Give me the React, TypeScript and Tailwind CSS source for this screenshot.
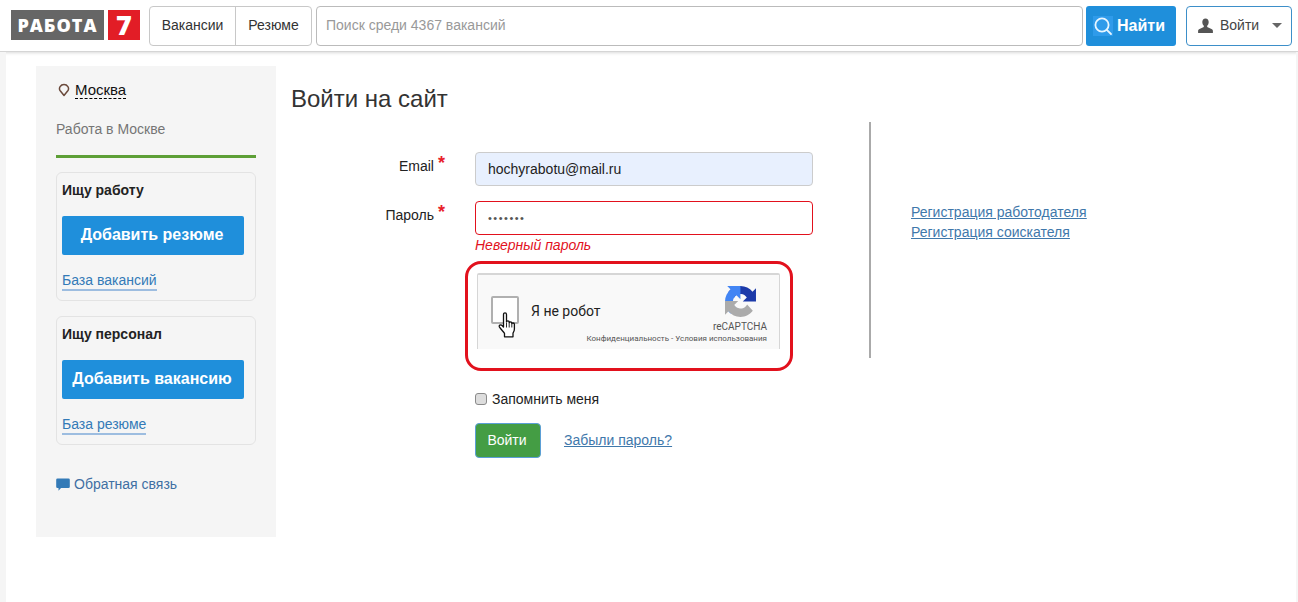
import React from "react";

const font = "font-['Liberation_Sans',Arial,sans-serif]";

function SearchIcon() {
  return (
    <svg width="20" height="20" viewBox="0 0 20 20" fill="none" className="bg-[#2f9bea]">
      <circle cx="9" cy="9" r="6.6" stroke="#e8f6ff" strokeWidth="1.8" />
      <path d="M13.8 13.8 18 18" stroke="#e8f6ff" strokeWidth="1.8" strokeLinecap="round" />
    </svg>
  );
}

function UserIcon() {
  return (
    <svg width="15" height="15" viewBox="0 0 15 15" fill="#555">
      <path d="M7.5 0.5C5.4 0.5 4.3 2.1 4.3 4c0 1.5.6 3 1.5 3.8v1.1L1 11.2c-.6.3-.9.9-.9 1.6V15h14.8v-2.2c0-.7-.3-1.3-.9-1.6L9.2 8.9V7.8c.9-.8 1.5-2.3 1.5-3.8 0-1.9-1.1-3.5-3.2-3.5z" />
    </svg>
  );
}

function RecaptchaLogo() {
  return (
    <svg width="31" height="31" viewBox="0 0 64 64">
      <path d="M64 31.955l-.033-1.37V4.687l-7.16 7.16C50.948 4.674 42.033.093 32.05.093c-10.4 0-19.622 4.96-25.458 12.64l11.736 11.86a15.55 15.55 0 0 1 4.754-5.334c2.05-1.6 4.952-2.906 8.968-2.906.485 0 .86.057 1.135.163 4.976.393 9.29 3.14 11.83 7.125l-8.307 8.307 32.29.004" fill="#1c3aa9" />
      <path d="M31.862 0l-1.37.033H4.594l7.16 7.16C4.58 13.052 0 21.967 0 31.95c0 10.4 4.96 19.622 12.64 25.458l11.86-11.736a15.55 15.55 0 0 1-5.334-4.754c-1.6-2.05-2.906-4.952-2.906-8.968 0-.485.057-.86.163-1.135.393-4.976 3.14-9.29 7.125-11.83l8.307 8.307L31.86 0" fill="#4285f4" />
      <path d="M.001 31.955l.033 1.37v25.9l7.16-7.16c5.86 7.173 14.774 11.754 24.76 11.754 10.4 0 19.622-4.96 25.458-12.64L45.676 38.32a15.55 15.55 0 0 1-4.754 5.334c-2.05 1.6-4.952 2.906-8.968 2.906-.485 0-.86-.057-1.135-.163-4.976-.393-9.29-3.14-11.83-7.125l8.307-8.307-32.29.004" fill="#ababab" />
    </svg>
  );
}

function HandCursor() {
  return (
    <svg width="20" height="26" viewBox="0 0 20 26" fill="#fff" stroke="#111" strokeWidth="1.3" strokeLinejoin="round">
      <path d="M5.500 2.500c0-2.300 3-2.300 3 0v7.500c0-1.600 2.700-1.600 2.700 0v1c0-1.500 2.600-1.500 2.600 0v1c0-1.400 2.600-1.400 2.600.3v4.700c0 2-.9 3-1.400 4.200v3.600H6.500v-3.400c-1.200-1.800-3-3.500-5-6.300-1.100-1.700 1.200-3.100 2.600-1.600l1.400 1.600z" />
      <path d="M8.500 11v4.500M11.200 11.500v4M13.800 12.500v3" fill="none" strokeWidth="0.9" />
    </svg>
  );
}

function ActionCard({ title, button, link }: { title: string; button: string; link: string }) {
  return (
    <div className="border border-[#e3e3e3] rounded-[6px] h-[129px] px-[5px] pt-[8px]">
      <div className="text-[14px] leading-[18px] font-bold text-[#222]">{title}</div>
      <button className="mt-[17px] w-[182px] h-[39px] pb-[2px] pr-[2px] bg-[#1f8fdb] rounded-[2px] text-white text-[16px] font-bold">
        {button}
      </button>
      <div className="mt-[13px]">
        <a className="text-[14px] leading-[17px] inline-block text-[#337ab7] border-b-2 border-[#9dbde0]">{link}</a>
      </div>
    </div>
  );
}

function Sidebar() {
  return (
    <aside className="w-[240px] h-[471px] bg-[#f5f5f5] px-[20px] shrink-0">
      <div className="flex items-center gap-[5px] pt-[15px] pl-[2px]">
        <svg width="12" height="14" viewBox="0 0 12 14" fill="none" stroke="#6b4a3c" strokeWidth="1.500">
          <path d="M6 12.500 2 7.500C.5 5 2.500 1.500 6 1.500s5.500 3.500 4 6z" strokeLinejoin="round" />
        </svg>
        <span className="text-[15px] leading-[17px] text-[#111] border-b border-dashed border-black">Москва</span>
      </div>
      <div className="text-[14px] leading-[17px] text-[#757575] mt-[22px]">Работа в Москве</div>
      <div className="h-[3px] bg-[#5d9f36] mt-[17px] mb-[14px]" />
      <div className="flex flex-col gap-[15px]">
        <ActionCard title="Ищу работу" button="Добавить резюме" link="База вакансий" />
        <ActionCard title="Ищу персонал" button="Добавить вакансию" link="База резюме" />
      </div>
      <div className="flex items-center gap-[4px] mt-[31px] text-[14px] leading-[17px] text-[#3f6fa3]">
        <svg width="14" height="14" viewBox="0 0 14 14" fill="#337ab7">
          <path d="M1.500 0.500h11a1.300 1.300 0 0 1 1.300 1.300v7a1.300 1.300 0 0 1-1.300 1.300H5L2.500 12.800V10.100h-1A1.300 1.300 0 0 1 .2 8.800v-7A1.300 1.300 0 0 1 1.500.500z" />
        </svg>
        <span>Обратная связь</span>
      </div>
    </aside>
  );
}

function Field({ label, children }: { label: string; children: React.ReactNode }) {
  return (
    <div className="flex">
      <label className="w-[154px] flex justify-end gap-[4px] text-[14px] leading-[20px] text-[#222] pt-[4px]">
        {label}
        <span className="text-[#e8202a] text-[18px] leading-[14px] font-bold">*</span>
      </label>
      <div className="ml-[30px]">{children}</div>
    </div>
  );
}

function Captcha() {
  return (
    <div className="ml-[174px] mt-[6px] w-[328px] h-[110px] border-[3px] border-[#e2111d] rounded-[16px] pt-[9px] pl-[9px]">
      <div className="relative w-[303px] h-[76px] bg-[#f9f9f9] border-x border-t-2 border-[#d6d6d6] rounded-t-[2px] flex">
        <div className="w-[28px] h-[28px] mt-[21px] ml-[13px] border-2 border-[#b0b0b0] bg-white rounded-[2px] shrink-0" />
        <div className="ml-[12px] mt-[28px] text-[14px] leading-[17px] text-[#222] font-['Roboto',sans-serif]">Я не робот</div>
        <div className="absolute left-[20px] top-[37px]">
          <HandCursor />
        </div>
        <div className="absolute right-[12px] top-[11px] flex flex-col items-end font-['Roboto',sans-serif]">
          <div className="mr-[11px] h-[31px]">
            <RecaptchaLogo />
          </div>
          <div className="text-[10px] leading-[12px] text-[#555] mt-[4px]">reCAPTCHA</div>
          <div className="text-[8px] leading-[10px] text-[#555] mt-[1px] whitespace-nowrap">Конфиденциальность - Условия использования</div>
        </div>
      </div>
    </div>
  );
}

function LoginForm() {
  return (
    <main className="flex-1 pl-[15px]">
      <h1 className="text-[24px] leading-[28px] font-normal text-[#333] mt-[19px]">Войти на сайт</h1>
      <div className="flex mt-[9px]">
        <div className="w-[580px] h-[236px] border-r-2 border-[#aaa] pt-[30px]">
          <Field label="Email">
            <input
              readOnly
              value="hochyrabotu@mail.ru"
              className="w-[338px] h-[34px] bg-[#e8f0fe] border border-[#ccc] rounded-[4px] px-[12px] text-[14px] text-[#222] outline-none"
            />
          </Field>
          <div className="mt-[15px]">
            <Field label="Пароль">
              <input
                readOnly
                type="password"
                value="1234567"
                className="w-[338px] h-[34px] bg-white border border-[#e2111d] rounded-[4px] px-[12px] text-[11px] tracking-[1.5px] text-[#555] outline-none"
              />
              <div className="text-[14px] leading-[20px] italic text-[#e2111d]">Неверный пароль</div>
            </Field>
          </div>
          <Captcha />
        </div>
        <div className="pl-[40px] pt-[80px] flex flex-col text-[14px] leading-[20px] text-[#3f78ab] underline">
          <a>Регистрация работодателя</a>
          <a>Регистрация соискателя</a>
        </div>
      </div>
      <div className="ml-[184px] mt-[31px] flex items-center gap-[5px] h-[20px] text-[14px] text-[#222]">
        <span className="w-[12px] h-[12px] bg-[#ddd] border border-[#8a8a8a] rounded-[3px]" />
        Запомнить меня
      </div>
      <div className="ml-[184px] mt-[14px] flex items-center">
        <button className="w-[66px] h-[35px] pr-[2px] bg-[#449d44] border border-[#5b9fd6] rounded-[4px] text-white text-[14px]">Войти</button>
        <a className="ml-[23px] text-[14px] text-[#3f78ab] underline">Забыли пароль?</a>
      </div>
    </main>
  );
}

export default function App() {
  return (
    <div className={`${font} min-h-[602px] bg-white relative`}>
      <header className="h-[52px] bg-white border-b border-[#d5d5d5] shadow-[0_1px_3px_rgba(0,0,0,0.15)] flex items-center pl-[11px] pr-[6px] gap-[4px] relative">
        <div className="flex h-[30px] items-stretch gap-[4px] mb-[1px] font-['Open_Sans',sans-serif]">
          <div className="w-[93px] bg-[#666] text-white font-extrabold text-[18px] tracking-[1px] flex items-center justify-center">РАБОТА</div>
          <div className="w-[32px] bg-[#e21d26] text-white font-extrabold text-[27px] flex items-center justify-center">7</div>
        </div>
        <div className="flex h-[40px] ml-[5px] border border-[#c8c8c8] rounded-[4px] text-[14px] text-[#333]">
          <div className="w-[86px] flex items-center justify-center border-r border-[#c8c8c8]">Вакансии</div>
          <div className="w-[75px] flex items-center justify-center">Резюме</div>
        </div>
        <div className="flex-1 h-[40px] border border-[#bbb] rounded-[4px] flex items-center px-[9px] text-[14px] text-[#999]">Поиск среди 4367 вакансий</div>
        <button className="w-[90px] h-[40px] bg-[#1f8fdb] rounded-[3px] flex items-center pl-[7px] gap-[4px] text-white font-bold text-[16px] -ml-[1px]">
          <SearchIcon />
          Найти
        </button>
        <div className="w-[106px] h-[40px] ml-[6px] border border-[#3d8fc9] rounded-[4px] flex items-center pl-[11px] gap-[7px] text-[14px] text-[#444]">
          <UserIcon />
          Войти
          <svg width="10" height="5" viewBox="0 0 10 5" fill="#666" className="ml-[6px]">
            <path d="M0 0h10L5 5z" />
          </svg>
        </div>
      </header>
      <div className="w-[6px] h-[550px] bg-[#f5f5f5] absolute left-0 top-[52px]" />
      <div className="w-[2px] h-[550px] bg-[#f5f5f5] absolute right-0 top-[52px]" />
      <div className="flex pl-[36px] pt-[14px]">
        <Sidebar />
        <LoginForm />
      </div>
    </div>
  );
}
